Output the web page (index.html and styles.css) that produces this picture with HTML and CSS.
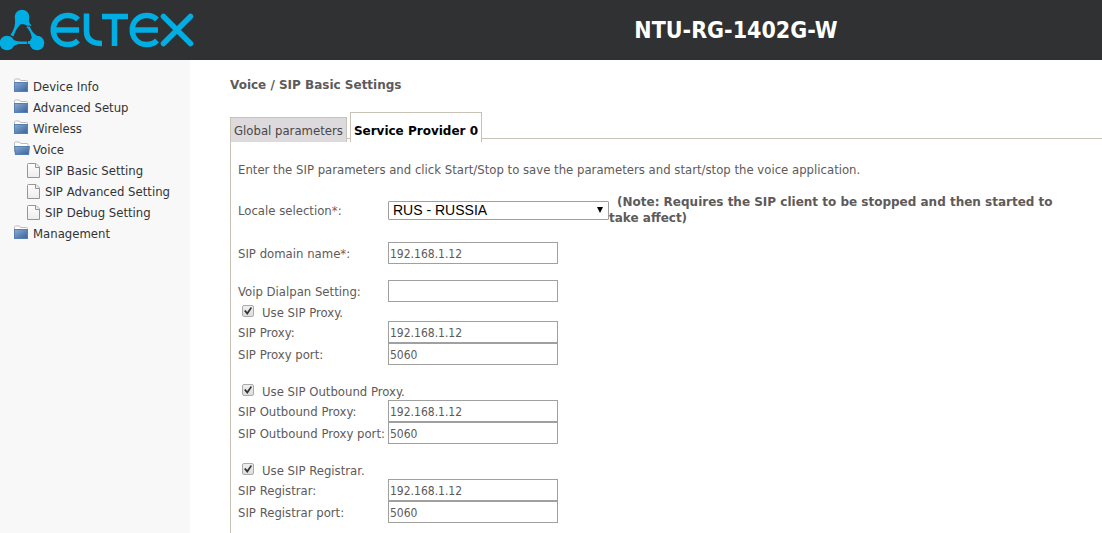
FILE: index.html
```html
<!DOCTYPE html>
<html lang="en">
<head>
<meta charset="utf-8">
<title>NTU-RG-1402G-W</title>
<link rel="stylesheet" href="styles.css">
</head>
<body>
<svg class="sprite" aria-hidden="true">
  <defs>
    <linearGradient id="blue" x1="0" y1="0" x2="1" y2="1"><stop offset="0" stop-color="#86a9d0"/><stop offset="1" stop-color="#3c659f"/></linearGradient>
    <linearGradient id="paper" x1="0" y1="0" x2="0" y2="1"><stop offset="0" stop-color="#fff"/><stop offset="1" stop-color="#ececec"/></linearGradient>
    <symbol id="folder" viewBox="0 0 18 17">
      <path d="M.5 5V2q0-1 1-1h4l1 1.500h6q1 0 1 1V5z" fill="#fff" stroke="#bdbdbd"/>
      <rect y="4" width="14" height="10" fill="#587fb2"/>
      <rect x="1" y="5" width="12" height="8" fill="url(#blue)"/>
    </symbol>
    <symbol id="folder-open" viewBox="0 0 18 17">
      <path d="M.5 11V2q0-1 1-1h4l1 1.500H13q1 0 1 1V11z" fill="#fff" stroke="#bdbdbd"/>
      <path d="M0 5h16l-1 9H1z" fill="#587fb2"/>
      <path d="M1.200 6h13.600l-.8 7H2z" fill="url(#blue)"/>
    </symbol>
    <symbol id="page" viewBox="0 -1 18 17">
      <path d="M.5 1.500q0-1 1-1H9L12.500 4v10.500H.5z" fill="url(#paper)" stroke="#969696"/>
      <path d="M8.500.5v4h4" fill="#eee" stroke="#969696"/>
    </symbol>
  </defs>
</svg>
<header class="header">
  <svg class="logo" viewBox="0 0 196 60" role="img" aria-label="Eltex">
    <g fill="#00aee3">
      <circle cx="22" cy="17" r="7.300"/><circle cx="7" cy="43" r="7.300"/><circle cx="37" cy="43" r="7.300"/>
      <path d="M15 19q1 8-4.500 16l3 1.500Q16 28 21 24z"/>
      <path d="M23 24q4 1 6 3l2.500-1.500Q28 22 29 18zM26.500 27l3-2q1 6 7.500 11l-5 2.500q-1-7-5.500-11.500z"/>
      <path d="M10 37.500q5 4 10 4h7v2.500h-7q-5 0-9 4.500z"/>
      <path d="M28 41h3l2-3v9l-2-3h-3z"/>
    </g>
    <g fill="none" stroke="#00aee3" stroke-width="5.500">
      <path d="M78 19.500C72 13.500 62 14.500 57 20S52 34.500 57 40 72 46.500 78 40.500M54 30h25"/>
      <path d="M86.500 13.500V31q0 12.500 15.500 12.500M102 16.500h26M114.500 16.500v29.500"/>
      <path d="M157 19.500C151 13.500 141 14.500 136 20S131 34.500 136 40 151 46.500 157 40.500M133 30h25"/>
      <path d="M163.500 16.500l27 27M190.500 16.500l-27 27" stroke-linecap="round"/>
    </g>
  </svg>
  <h1 class="device">NTU-RG-1402G-W</h1>
</header>
<div class="layout">
  <nav class="menu">
    <a class="item" href="#"><svg class="icon"><use href="#folder"/></svg>Device Info</a>
    <a class="item" href="#"><svg class="icon"><use href="#folder"/></svg>Advanced Setup</a>
    <a class="item" href="#"><svg class="icon"><use href="#folder"/></svg>Wireless</a>
    <a class="item" href="#"><svg class="icon"><use href="#folder-open"/></svg>Voice</a>
    <a class="item sub" href="#"><svg class="icon"><use href="#page"/></svg>SIP Basic Setting</a>
    <a class="item sub" href="#"><svg class="icon"><use href="#page"/></svg>SIP Advanced Setting</a>
    <a class="item sub" href="#"><svg class="icon"><use href="#page"/></svg>SIP Debug Setting</a>
    <a class="item" href="#"><svg class="icon"><use href="#folder"/></svg>Management</a>
  </nav>
  <main class="main">
    <h2 class="title">Voice / SIP Basic Settings</h2>
    <div class="tabs">
      <button class="tab" type="button">Global parameters</button>
      <button class="tab active" type="button">Service Provider 0</button>
    </div>
    <form class="panel">
      <p class="intro">Enter the SIP parameters and click Start/Stop to save the parameters and start/stop the voice application.</p>
      <div class="group row locale">
        <label for="locale">Locale selection<span class="req">*</span>:</label>
        <span class="select-wrap"><select id="locale"><option>RUS - RUSSIA</option></select></span>
        <strong class="note">(Note: Requires the SIP client to be stopped and then started to take affect)</strong>
      </div>
      <div class="group row">
        <label for="domain">SIP domain name<span class="req">*</span>:</label>
        <input class="text" id="domain" type="text" value="192.168.1.12">
      </div>
      <div class="group">
        <div class="row"><label for="dialplan">Voip Dialpan Setting:</label><input class="text" id="dialplan" type="text"></div>
        <label class="check"><input type="checkbox" checked>Use SIP Proxy.</label>
        <div class="row"><label for="proxy">SIP Proxy:</label><input class="text" id="proxy" type="text" value="192.168.1.12"></div>
        <div class="row"><label for="pport">SIP Proxy port:</label><input class="text" id="pport" type="text" value="5060"></div>
      </div>
      <div class="group">
        <label class="check"><input type="checkbox" checked>Use SIP Outbound Proxy.</label>
        <div class="row"><label for="out">SIP Outbound Proxy:</label><input class="text" id="out" type="text" value="192.168.1.12"></div>
        <div class="row"><label for="oport">SIP Outbound Proxy port:</label><input class="text" id="oport" type="text" value="5060"></div>
      </div>
      <div class="group">
        <label class="check"><input type="checkbox" checked>Use SIP Registrar.</label>
        <div class="row"><label for="reg">SIP Registrar:</label><input class="text" id="reg" type="text" value="192.168.1.12"></div>
        <div class="row"><label for="rport">SIP Registrar port:</label><input class="text" id="rport" type="text" value="5060"></div>
      </div>
    </form>
  </main>
</div>
</body>
</html>
```
FILE: styles.css
```css
* { box-sizing: border-box; }
body {
  margin: 0;
  min-height: 100vh;
  display: flex;
  flex-direction: column;
  background: #fff;
  color: #5e5a5a;
  font: 13px/16px "DejaVu Sans Condensed", "Noto Sans", sans-serif;
}
.sprite { position: absolute; width: 0; height: 0; }
.header {
  display: grid;
  grid-template-columns: 196px 1fr;
  padding-right: 2px;
  height: 60px;
  align-items: center;
  background: #303133;
}
.logo { width: 196px; height: 60px; }
.device {
  margin: 0;
  padding-left: 176px;
  text-align: center;
  color: #fff;
  font: bold 23px/28px "DejaVu Sans Condensed", sans-serif;
}
.layout { display: flex; flex: 1; }
.menu { flex: 0 0 190px; padding: 16px 0 0 14px; background: #f8f8f8; }
.item {
  display: flex;
  align-items: center;
  gap: 1px;
  height: 21px;
  color: #333;
  text-decoration: none;
}
.sub { padding-left: 13px; gap: 0; }
.icon { width: 18px; height: 17px; flex: none; }
.main { flex: 1; min-width: 0; padding: 17px 0 0 40px; }
.title { margin: 0 0 19px; font: bold 12px/16px "DejaVu Sans", sans-serif; }
.tabs {
  display: flex;
  align-items: flex-end;
  gap: 3px;
  height: 30px;
  background: linear-gradient(#c9c1b5, #c9c1b5) 0 26px / 100% 1px no-repeat;
}
.tab {
  height: 25px;
  padding: 2px 3px 0;
  border: 1px solid #c9c1b5;
  border-bottom: 0;
  background: #dddadd;
  color: #4a4648;
  font: inherit;
}
.active { height: 30px; padding-top: 7px; background: #fff; color: #000; font: bold 12px/16px "DejaVu Sans", sans-serif; }
.panel { padding: 20px 40px 10px 7px; border-left: 1px solid #c9c1b5; }
.intro { margin: 0 0 16px; }
.group { margin-bottom: 16px; }
.row { display: grid; grid-template-columns: 150px 1fr; align-items: center; }
.row label { padding-top: 2px; }
.locale { grid-template-columns: 150px 221px 1fr; }
.note { font: bold 12px/16px "DejaVu Sans", sans-serif; text-indent: 8px; }
.req { color: #855; }
label { white-space: nowrap; }
.text {
  width: 170px;
  height: 22px;
  padding: 2px 1px 0;
  border: 1px solid #a0a0a0;
  color: inherit;
  font: 12px/16px "DejaVu Sans Condensed", "Noto Sans", sans-serif;
}
.select-wrap { display: block; position: relative; }
.select-wrap::after {
  content: "";
  position: absolute;
  right: 6px;
  top: 6px;
  border: solid transparent;
  border-width: 6px 3px 0;
  border-top-color: #000;
}
select {
  display: block;
  width: 100%;
  height: 19px;
  padding: 0 4px;
  appearance: none;
  border: 1px solid #a0a0a0;
  border-radius: 1px;
  background: #fff;
  color: #000;
  font: 14px/16px "Liberation Sans", sans-serif;
}
.check { display: flex; gap: 8px; height: 19px; padding: 3px 0 0 4px; }
.check input {
  appearance: none;
  width: 12px;
  height: 12px;
  margin: 0;
  border: 1px solid #aaa;
  border-radius: 2px;
  background: linear-gradient(#efefef, #ddd);
  display: grid;
  place-items: center;
}
.check input:checked::before {
  content: "";
  width: 8px;
  height: 8px;
  background: #333;
  clip-path: polygon(0 50%, 20% 38%, 40% 62%, 85% 0, 100% 12%, 42% 100%);
}
```
